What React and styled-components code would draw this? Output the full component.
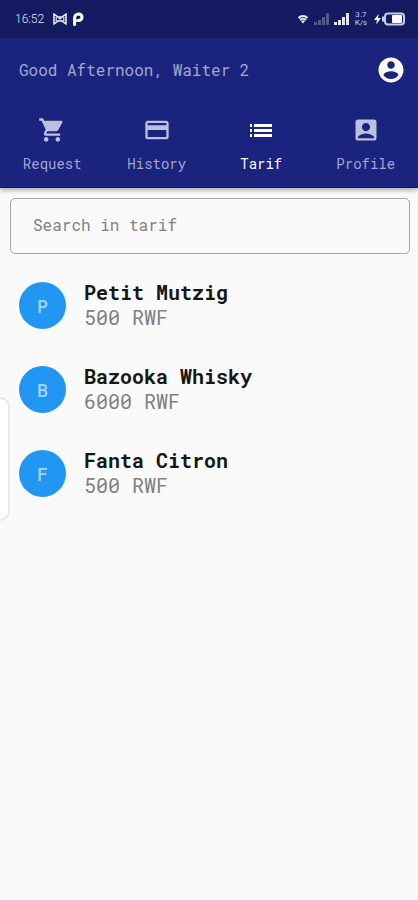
import React, { useState } from 'react';
import styled, { createGlobalStyle } from 'styled-components';
import { MdShoppingCart, MdPayment, MdAccountBox } from 'react-icons/md';

const GlobalStyle = createGlobalStyle`
  * {
    box-sizing: border-box;
  }

  body {
    margin: 0;
    background: #fafafa;
    font-family: "Roboto Mono", "DejaVu Sans Mono", monospace;
  }
`;

const Page = styled.div`
  position: relative;
  min-height: 100vh;
  background: #fafafa;
`;

const StatusBar = styled.div`
  display: flex;
  align-items: center;
  justify-content: space-between;
  height: 38px;
  padding: 0 13px 0 15px;
  background: #151b60;
  color: #e4e6f4;
  font-family: Roboto, sans-serif;
`;

const StatusGroup = styled.div`
  display: flex;
  align-items: center;
  gap: 5px;

  svg {
    display: block;
  }
`;

const Clock = styled.time`
  margin-right: 4px;
  font-size: 12px;
  line-height: 16px;
  font-weight: 300;
`;

const NetSpeed = styled.span`
  display: flex;
  flex-direction: column;
  align-items: center;
  width: 14px;
  font-size: 8px;
  line-height: 8px;
  font-weight: 500;
  color: #a9adcf;
`;

const Header = styled.header`
  background: #1a237e;
  border-bottom: 1px solid #0c1270;
  box-shadow: 0 2px 5px rgba(0, 0, 0, 0.35);
`;

const TitleRow = styled.div`
  display: flex;
  align-items: center;
  justify-content: space-between;
  height: 64px;
  padding: 0 12px 0 19px;
`;

const Greeting = styled.h1`
  margin: 0;
  font-size: 16px;
  line-height: 24px;
  font-weight: 400;
  color: #a3a7cb;
`;

const AccountButton = styled.button`
  display: flex;
  padding: 0;
  border: 0;
  background: none;
  color: #fff;
  cursor: pointer;
`;

const Tabs = styled.nav`
  display: grid;
  grid-template-columns: repeat(4, 1fr);
`;

const Tab = styled.a`
  display: flex;
  flex-direction: column;
  align-items: center;
  gap: 10px;
  height: 85px;
  padding-top: 14px;
  font-size: 14px;
  line-height: 20px;
  text-decoration: none;
  color: ${({ $active }) => ($active ? '#fff' : '#a3a7cb')};

  svg {
    width: 28px;
    height: 28px;
    color: ${({ $active }) => ($active ? '#fff' : '#bcc0e0')};
  }
`;

const SearchForm = styled.form`
  padding: 10px 8px 0 10px;
`;

const SearchInput = styled.input`
  display: block;
  width: 100%;
  height: 56px;
  padding: 0 22px 3px;
  border: 1px solid #a6a6a6;
  border-radius: 5px;
  background: transparent;
  font-family: inherit;
  font-size: 16px;
  color: #212121;

  &::placeholder {
    color: #808080;
    opacity: 1;
  }
`;

const TarifList = styled.ul`
  margin: 0;
  padding: 9px 0 0;
  list-style: none;
`;

const TarifItem = styled.li`
  display: flex;
  align-items: center;
  gap: 18px;
  height: 84px;
  padding: 0 19px;
`;

const Avatar = styled.span`
  display: flex;
  flex: none;
  align-items: center;
  justify-content: center;
  width: 47px;
  height: 47px;
  padding-top: 2px;
  border-radius: 50%;
  background: #2196f3;
  color: #a6d5fa;
  font-size: 18px;
  font-weight: 500;
`;

const ItemName = styled.h2`
  margin: 0;
  font-size: 20px;
  line-height: 25px;
  font-weight: 700;
  color: #161616;
`;

const ItemPrice = styled.p`
  margin: 0;
  font-size: 20px;
  line-height: 25px;
  color: #808080;
`;

// system side panel handle, floats over the left edge of the screen
const EdgeHandle = styled.div`
  position: absolute;
  top: 397px;
  left: 0;
  width: 10px;
  height: 124px;
  border: 2px solid #e9e9e9;
  border-left: 0;
  border-radius: 0 10px 10px 0;
  background: #fff;
`;

const ListIcon = () => (
  <svg viewBox="0 0 28 28" fill="currentColor" aria-hidden="true">
    <path d="M3 8h2v3H3zM3 13h2v3H3zM3 18h2v3H3zM7 8h18v3H7zM7 13h18v3H7zM7 18h18v3H7z" />
  </svg>
);

const AccountIcon = () => (
  <svg width="30" height="30" viewBox="0 0 24 24" fill="currentColor" aria-hidden="true">
    <path d="M12 2C6.48 2 2 6.48 2 12s4.48 10 10 10 10-4.48 10-10S17.52 2 12 2zm0 3c1.66 0 3 1.34 3 3s-1.34 3-3 3-3-1.34-3-3 1.34-3 3-3zm0 14.2c-2.5 0-4.71-1.28-6-3.22.03-1.99 4-3.08 6-3.08 1.99 0 5.97 1.09 6 3.08-1.29 1.94-3.5 3.22-6 3.22z" />
  </svg>
);

const BowIcon = () => (
  <svg width="14" height="12" viewBox="0 0 14 12" fill="none" stroke="currentColor" aria-hidden="true">
    <path d="M1 1.2 5 4h4l4-2.8v9.6L9 8H5l-4 2.8z" strokeWidth="1.6" />
    <path d="M3.2 4v4M10.8 4v4M5 4l4 4M9 4 5 8" strokeWidth="1.2" />
  </svg>
);

const ParkingIcon = () => (
  <svg width="12" height="14" viewBox="0 0 12 14" fill="none" stroke="#fff" aria-hidden="true">
    <path d="M2.6 12.4V6c0-2.400 1.600-4 3.800-4s3.600 1.300 3.600 3.200-1.500 3.300-3.500 3.300H5.500" strokeWidth="3" strokeLinecap="round" />
  </svg>
);

const WifiIcon = () => (
  <svg width="12" height="10" viewBox="0 0 12 10" fill="currentColor" aria-hidden="true">
    <path d="M6 9.6.8 3.2C2.2 1.800 4 1 6 1s3.800.8 5.200 2.200z" />
    <path d="M2.5 4.8C4.500 3 7.500 3 9.500 4.800" fill="none" stroke="#151b60" strokeWidth="0.8" />
    <path d="M4 6.800c1.200-.9 2.800-.9 4 0" fill="none" stroke="#151b60" strokeWidth="0.6" />
  </svg>
);

const SignalIcon = ({ opacity = 1 }) => (
  <svg width="15" height="12" viewBox="0 0 15 12" fill="currentColor" opacity={opacity} aria-hidden="true">
    <path d="M0 9h3v3H0zM4 7h3v5H4zM8 4h3v8H8zM12 0h3v12h-3z" />
  </svg>
);

const BatteryIcon = () => (
  <svg width="32" height="14" viewBox="0 0 32 14" aria-hidden="true">
    <path d="M5.5 2 1 8h3l-.8 4.500L8 6H5z" fill="#fff" />
    <path d="M9 4.500h3v5H9z" fill="#c9cce6" />
    <rect x="12" y="1.500" width="19" height="11" rx="3" fill="none" stroke="#c9cce6" strokeWidth="2" />
    <rect x="19" y="3" width="10" height="8" rx="1" fill="#fff" />
  </svg>
);

const tabs = [
  { id: 'request', label: 'Request', Icon: MdShoppingCart },
  { id: 'history', label: 'History', Icon: MdPayment },
  { id: 'tarif', label: 'Tarif', Icon: ListIcon },
  { id: 'profile', label: 'Profile', Icon: MdAccountBox },
];

const tarifs = [
  { name: 'Petit Mutzig', price: '500 RWF' },
  { name: 'Bazooka Whisky', price: '6000 RWF' },
  { name: 'Fanta Citron', price: '500 RWF' },
];

const App = () => {
  const [query, setQuery] = useState('');
  const visible = tarifs.filter(t => t.name.toLowerCase().includes(query.toLowerCase()));

  return (
    <Page>
      <GlobalStyle />
      <StatusBar>
        <StatusGroup>
          <Clock>16:52</Clock>
          <BowIcon />
          <ParkingIcon />
        </StatusGroup>
        <StatusGroup>
          <WifiIcon />
          <SignalIcon opacity={0.3} />
          <SignalIcon />
          <NetSpeed>
            <span>3.7</span>
            <span>K/s</span>
          </NetSpeed>
          <BatteryIcon />
        </StatusGroup>
      </StatusBar>

      <Header>
        <TitleRow>
          <Greeting>Good Afternoon, Waiter 2</Greeting>
          <AccountButton type="button" aria-label="Account">
            <AccountIcon />
          </AccountButton>
        </TitleRow>
        <Tabs>
          {tabs.map(({ id, label, Icon }) => (
            <Tab
              key={id}
              href={`#${id}`}
              $active={id === 'tarif'}
              aria-current={id === 'tarif' ? 'page' : undefined}
            >
              <Icon />
              <span>{label}</span>
            </Tab>
          ))}
        </Tabs>
      </Header>

      <main>
        <SearchForm onSubmit={e => e.preventDefault()}>
          <SearchInput
            type="text"
            aria-label="Search in tarif"
            placeholder="Search in tarif"
            value={query}
            onChange={e => setQuery(e.target.value)}
          />
        </SearchForm>
        <TarifList>
          {visible.map(({ name, price }) => (
            <TarifItem key={name}>
              <Avatar aria-hidden="true">{name.charAt(0)}</Avatar>
              <div>
                <ItemName>{name}</ItemName>
                <ItemPrice>{price}</ItemPrice>
              </div>
            </TarifItem>
          ))}
        </TarifList>
      </main>
      <EdgeHandle />
    </Page>
  );
};

export default App;
